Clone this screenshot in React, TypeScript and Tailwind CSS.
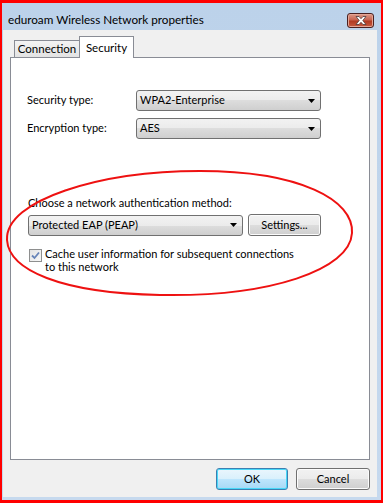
import React from "react";

const font = { fontFamily: 'Lato, "Noto Sans", sans-serif' };

function Arrow() {
  return (
    <svg width="7" height="4" viewBox="0 0 7 4" className="shrink-0">
      <path d="M0 0h7L3.5 4z" fill="#000" />
    </svg>
  );
}

function Combo({ value, className }: { value: string; className: string }) {
  return (
    <div
      className={`flex h-[21px] items-center justify-between rounded-[3px] border border-[#707070] bg-[linear-gradient(#f2f2f2_0%,#ebebeb_50%,#dddddd_50%,#cfcfcf_100%)] pl-[3px] pr-[5px] text-[11px] text-black ${className}`}
    >
      <span>{value}</span>
      <Arrow />
    </div>
  );
}

function Button({ label, focused, className }: { label: string; focused?: boolean; className: string }) {
  return (
    <div
      className={`flex h-[22px] items-center justify-center rounded-[3px] border text-[11px] text-black ${
        focused
          ? "border-[#3c7fb1] bg-[linear-gradient(#eaf6fd_0%,#d9f0fc_50%,#bee6fd_50%,#a7d9f5_100%)] shadow-[inset_0_0_0_1px_#48d8f8]"
          : "border-[#707070] bg-[linear-gradient(#f2f2f2_0%,#ebebeb_50%,#dddddd_50%,#cfcfcf_100%)] shadow-[inset_0_0_0_1px_#fcfcfc]"
      } ${className}`}
    >
      {label}
    </div>
  );
}

export default function App() {
  return (
    <div
      style={font}
      className="relative flex h-[503px] w-[383px] flex-col overflow-hidden border-b-[3px] border-l-[2px] border-r-[2px] border-t-[3px] border-[#ff0000] bg-[linear-gradient(#bcd2ea,#c6d9ee)]"
    >
      {/* title bar */}
      <div className="flex h-[27px] shrink-0 items-start justify-between pl-[6px] pr-[7px]">
        <span className="mt-[9px] text-[11.7px] leading-[15px] text-[#000]">eduroam Wireless Network properties</span>
        <div className="mt-[10px] flex h-[15px] w-[27px] items-center justify-center rounded-[3px] border border-[#4a2020] bg-[linear-gradient(#dc9a8a_0%,#c86450_45%,#b23a22_55%,#c65a40_100%)] shadow-[inset_0_0_0_1px_#e3a595]">
          <svg width="12" height="9" viewBox="0 0 12 9">
            <path
              d="M1 0.5h3l2 2.2 2-2.2h3L7.8 4.5 11 8.5H8L6 6.3 4 8.5H1L4.2 4.5z"
              fill="#fff"
              stroke="#4b3a3a"
              strokeWidth="0.8"
            />
          </svg>
        </div>
      </div>

      {/* client area */}
      <div className="ml-[1px] mr-[4px] flex flex-1 flex-col bg-[#f0f0f0]">
        {/* tabs */}
        <div className="ml-[9px] mt-[7px] flex h-[20px] items-end">
          <div className="ml-[2px] flex h-[17px] w-[66px] items-center justify-center border border-b-0 border-[#898c95] bg-[linear-gradient(#f3f3f3,#e3e3e3)] text-[11.5px] text-black">
            Connection
          </div>
          <div className="relative -mb-[1px] -ml-[1px] flex h-[22px] w-[55px] items-start justify-center border border-b-0 border-[#898c95] bg-white pt-[2px] text-[11.5px] text-black">
            Security
          </div>
        </div>

        {/* panel */}
        <div className="ml-[7px] h-[403px] w-[360px] border border-[#898c95] bg-white">
          <div className="mt-[32px] flex items-center">
            <span className="w-[125px] shrink-0 pl-[16px] text-[11px] text-black">Security type:</span>
            <Combo value="WPA2-Enterprise" className="w-[185px]" />
          </div>
          <div className="mt-[7px] flex items-center">
            <span className="w-[125px] shrink-0 pl-[16px] text-[11px] text-black">Encryption type:</span>
            <Combo value="AES" className="w-[185px]" />
          </div>

          <div className="ml-[17px] mt-[57px] text-[11px] leading-[14px] text-black">Choose a network authentication method:</div>
          <div className="ml-[17px] mt-[4px] flex items-center gap-[5px]">
            <Combo value="Protected EAP (PEAP)" className="w-[215px]" />
            <Button label="Settings..." className="w-[73px]" />
          </div>
          <div className="ml-[18px] mt-[13px] flex items-start gap-[3px]">
            <div className="flex h-[13px] w-[13px] shrink-0 items-center justify-center border border-[#8e8f8f] bg-[linear-gradient(135deg,#e3e3e3,#f8f8f8)]">
              <svg width="9" height="9" viewBox="0 0 9 9">
                <path d="M1 4.5l2.5 2.5L8 1.5" fill="none" stroke="#6784b8" strokeWidth="1.8" />
              </svg>
            </div>
            <span className="-mt-[1px] w-[290px] text-[11px] leading-[12.5px] text-black">
              Cache user information for subsequent connections
              <br />
              to this network
            </span>
          </div>
        </div>

        {/* buttons */}
        <div className="mt-[8px] flex justify-end gap-[8px] pr-[7px]">
          <Button label="OK" focused className="w-[72px]" />
          <Button label="Cancel" className="w-[74px]" />
        </div>
      </div>
      <div className="h-[3px] shrink-0" />

      {/* hand drawn red ellipse */}
      <svg className="pointer-events-none absolute -left-[2px] -top-[3px]" width="383" height="503" viewBox="0 0 383 503">
        <path
          d="M7 240 C 5 200, 100 171, 200 171 C 300 171, 354 200, 352 233 C 350 270, 270 297, 160 295 C 60 293, 9 270, 7 240 Z"
          fill="none"
          stroke="#ee1111"
          strokeWidth="2"
        />
      </svg>
    </div>
  );
}
